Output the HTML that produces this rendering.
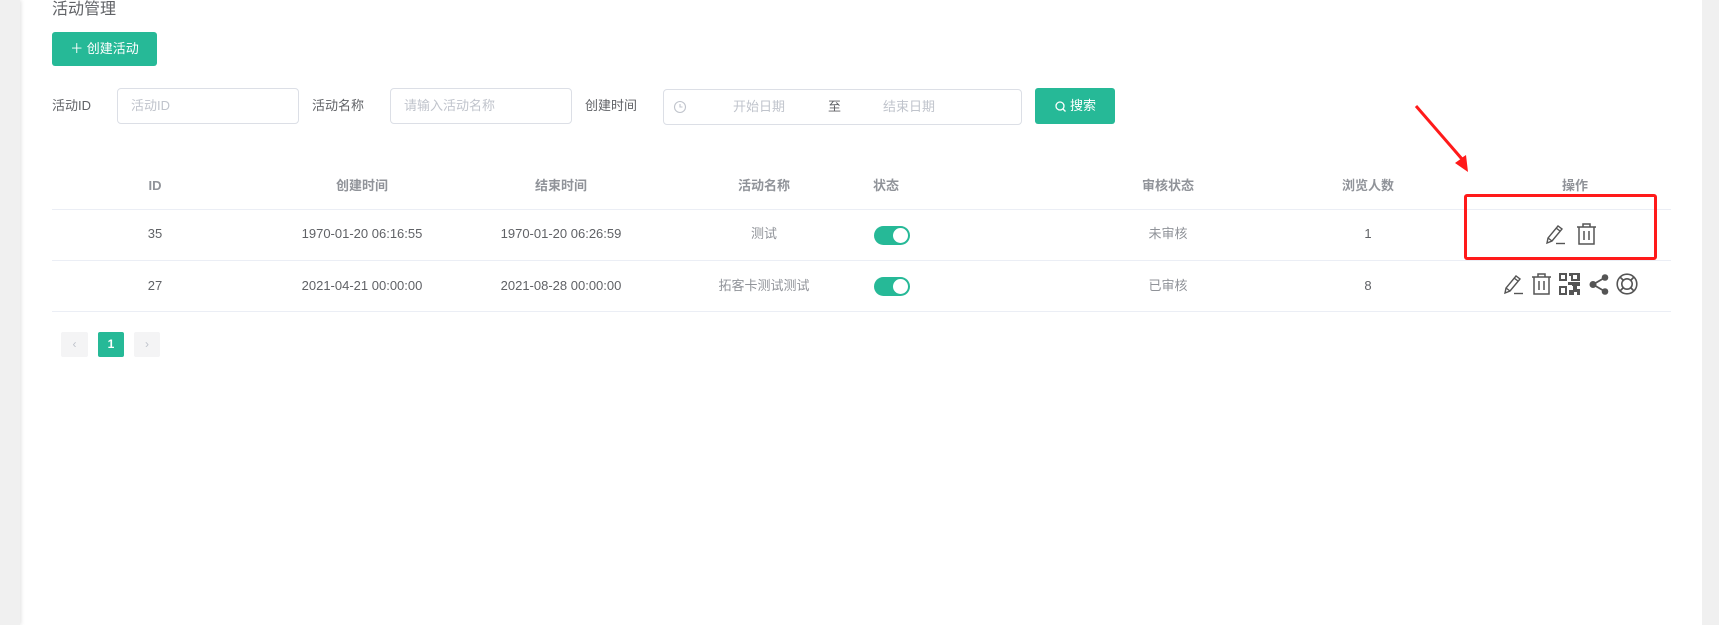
<!DOCTYPE html>
<html><head><meta charset="utf-8"><style>
*{margin:0;padding:0;box-sizing:border-box}
body{width:1719px;height:625px;background:#fff;position:relative;overflow:hidden;font-family:"Liberation Sans","Noto Sans CJK SC",sans-serif;font-size:13px;color:#606266}
.a{position:absolute}
.c{position:absolute;transform:translateX(-50%);white-space:nowrap;line-height:18px}
.inp{position:absolute;border:1px solid #dcdfe6;border-radius:4px;height:36px}
.ph{color:#c0c4cc;line-height:18px}
.line{position:absolute;left:52px;width:1619px;height:1px;background:#ebeef5}
.hd{color:#909399;font-weight:bold}
.tg{position:absolute;width:36px;height:19px;border-radius:10px;background:#26b997}
.tg:after{content:"";position:absolute;right:2px;top:2px;width:15px;height:15px;border-radius:50%;background:#fff}
svg{position:absolute}
</style></head><body>
<div class="a" style="left:0;top:0;width:20px;height:625px;background:#f0f0f0;box-shadow:1px 0 4px rgba(0,0,0,.12)"></div>
<div class="a" style="left:1702px;top:0;width:17px;height:625px;background:#f0f0f0"></div>
<div class="a" style="left:52px;top:0;font-size:16px;line-height:20px;color:#606266">活动管理</div>
<div class="a" style="left:52px;top:32px;width:105px;height:34px;background:#26b997;border-radius:3px;color:#fff;line-height:34px;text-align:center;font-size:13px">＋ 创建活动</div>

<div class="a" style="left:52px;top:97px;line-height:18px">活动ID</div>
<div class="inp" style="left:117px;top:88px;width:182px"><span class="a ph" style="left:13px;top:8px">活动ID</span></div>
<div class="a" style="left:312px;top:97px;line-height:18px">活动名称</div>
<div class="inp" style="left:390px;top:88px;width:182px"><span class="a ph" style="left:13px;top:8px">请输入活动名称</span></div>
<div class="a" style="left:585px;top:97px;line-height:18px">创建时间</div>
<div class="inp" style="left:663px;top:89px;width:359px">
<svg style="left:9px;top:10px" width="14" height="14" viewBox="0 0 14 14"><circle cx="7" cy="7" r="5.5" fill="none" stroke="#c0c4cc" stroke-width="1.1"/><path d="M7 4v3h2.5" fill="none" stroke="#c0c4cc" stroke-width="1.1"/></svg>
<span class="a ph" style="left:69px;top:8px">开始日期</span>
<span class="a" style="left:164px;top:8px;color:#606266;line-height:18px">至</span>
<span class="a ph" style="left:219px;top:8px">结束日期</span></div>
<div class="a" style="left:1035px;top:88px;width:80px;height:36px;background:#26b997;border-radius:3px;color:#fff;line-height:36px;text-align:center">
<svg style="left:20px;top:13px" width="11" height="11" viewBox="0 0 11 11"><circle cx="5" cy="5" r="4" fill="none" stroke="#fff" stroke-width="1.3"/><path d="M8 8l2.5 2.5" stroke="#fff" stroke-width="1.3"/></svg><span style="margin-left:16px">搜索</span></div>

<div class="c hd" style="left:155px;top:177px">ID</div>
<div class="c hd" style="left:362px;top:177px">创建时间</div>
<div class="c hd" style="left:561px;top:177px">结束时间</div>
<div class="c hd" style="left:764px;top:177px">活动名称</div>
<div class="c hd" style="left:886px;top:177px">状态</div>
<div class="c hd" style="left:1168px;top:177px">审核状态</div>
<div class="c hd" style="left:1368px;top:177px">浏览人数</div>
<div class="c hd" style="left:1575px;top:177px">操作</div>
<div class="line" style="top:209px"></div>

<div class="c" style="left:155px;top:225px">35</div>
<div class="c" style="left:362px;top:225px">1970-01-20 06:16:55</div>
<div class="c" style="left:561px;top:225px">1970-01-20 06:26:59</div>
<div class="c" style="left:764px;top:225px;color:#909399">测试</div>
<div class="tg" style="left:874px;top:226px"></div>
<div class="c" style="left:1168px;top:225px;color:#909399">未审核</div>
<div class="c" style="left:1368px;top:225px">1</div>
<div class="line" style="top:260px"></div>

<div class="c" style="left:155px;top:277px">27</div>
<div class="c" style="left:362px;top:277px">2021-04-21 00:00:00</div>
<div class="c" style="left:561px;top:277px">2021-08-28 00:00:00</div>
<div class="c" style="left:764px;top:277px;color:#909399">拓客卡测试测试</div>
<div class="tg" style="left:874px;top:277px"></div>
<div class="c" style="left:1168px;top:277px;color:#909399">已审核</div>
<div class="c" style="left:1368px;top:277px">8</div>
<div class="line" style="top:311px"></div>

<svg style="left:1545px;top:223px" width="22" height="22" viewBox="0 0 22 22" fill="none" stroke="#555" stroke-width="1.4"><path d="M2 20l1-5L13 3l4 3L7 18z M11 5l4 3 M3 15l4 3"/><path d="M11 20.5h9"/></svg>
<svg style="left:1576px;top:222px" width="21" height="23" viewBox="0 0 21 23" fill="none" stroke="#555" stroke-width="1.5"><path d="M1 5h19 M7 5V2h7v3 M3 5v17h15V5 M8 9v9 M13 9v9"/></svg>

<svg style="left:1503px;top:273px" width="22" height="22" viewBox="0 0 22 22" fill="none" stroke="#555" stroke-width="1.4"><path d="M2 20l1-5L13 3l4 3L7 18z M11 5l4 3 M3 15l4 3"/><path d="M11 20.5h9"/></svg>
<svg style="left:1531px;top:272px" width="21" height="23" viewBox="0 0 21 23" fill="none" stroke="#555" stroke-width="1.5"><path d="M1 5h19 M7 5V2h7v3 M3 5v17h15V5 M8 9v9 M13 9v9"/></svg>
<svg style="left:1559px;top:273px" width="21" height="22" viewBox="0 0 21 22" fill="#555"><path d="M0 0h8v8H0z M2 2v4h4V2z M12 0h9v8h-9z M14 2v4h4V2z M0 13h8v9H0z M2 15v5h4v-5z M10 0h2v3h-2z M9 9h4v3H9z M13 9h8v4h-3v3h3v6h-3v-3h-3v3h-4v-5h3v-4h-1z M10 17h2v5h-2z"/></svg>
<svg style="left:1589px;top:274px" width="20" height="21" viewBox="0 0 20 21" fill="#555"><circle cx="4" cy="10.5" r="3.5"/><circle cx="16" cy="3.5" r="3.3"/><circle cx="16" cy="17.5" r="3.3"/><path d="M4 10.5L16 3.5M4 10.5L16 17.5" stroke="#555" stroke-width="1.8"/></svg>
<svg style="left:1616px;top:273px" width="22" height="22" viewBox="0 0 22 22" fill="none" stroke="#555" stroke-width="1.6"><circle cx="11" cy="11" r="9.8"/><circle cx="11" cy="11" r="5.2"/><path d="M4 4l3.5 3.5M18 4l-3.5 3.5M4 18l3.5-3.5M18 18l-3.5-3.5"/></svg>

<div class="a" style="left:1464px;top:194px;width:193px;height:66px;border:3px solid #ff1a1a;border-radius:3px"></div>
<svg style="left:1410px;top:100px" width="70" height="80" viewBox="0 0 70 80"><path d="M6 6L52 58L45 63L58 72L56 55L50 59Z" fill="#ff1a1a"/><path d="M6 6L52 59" stroke="#ff1a1a" stroke-width="3"/></svg>

<div class="a" style="left:61px;top:332px;width:27px;height:25px;background:#f4f4f5;border-radius:2px;color:#c0c4cc;text-align:center;line-height:25px;font-size:12px">‹</div>
<div class="a" style="left:98px;top:332px;width:26px;height:25px;background:#26b997;border-radius:2px;color:#fff;text-align:center;line-height:25px;font-size:12px;font-weight:bold">1</div>
<div class="a" style="left:134px;top:332px;width:26px;height:25px;background:#f4f4f5;border-radius:2px;color:#c0c4cc;text-align:center;line-height:25px;font-size:12px">›</div>
</body></html>
